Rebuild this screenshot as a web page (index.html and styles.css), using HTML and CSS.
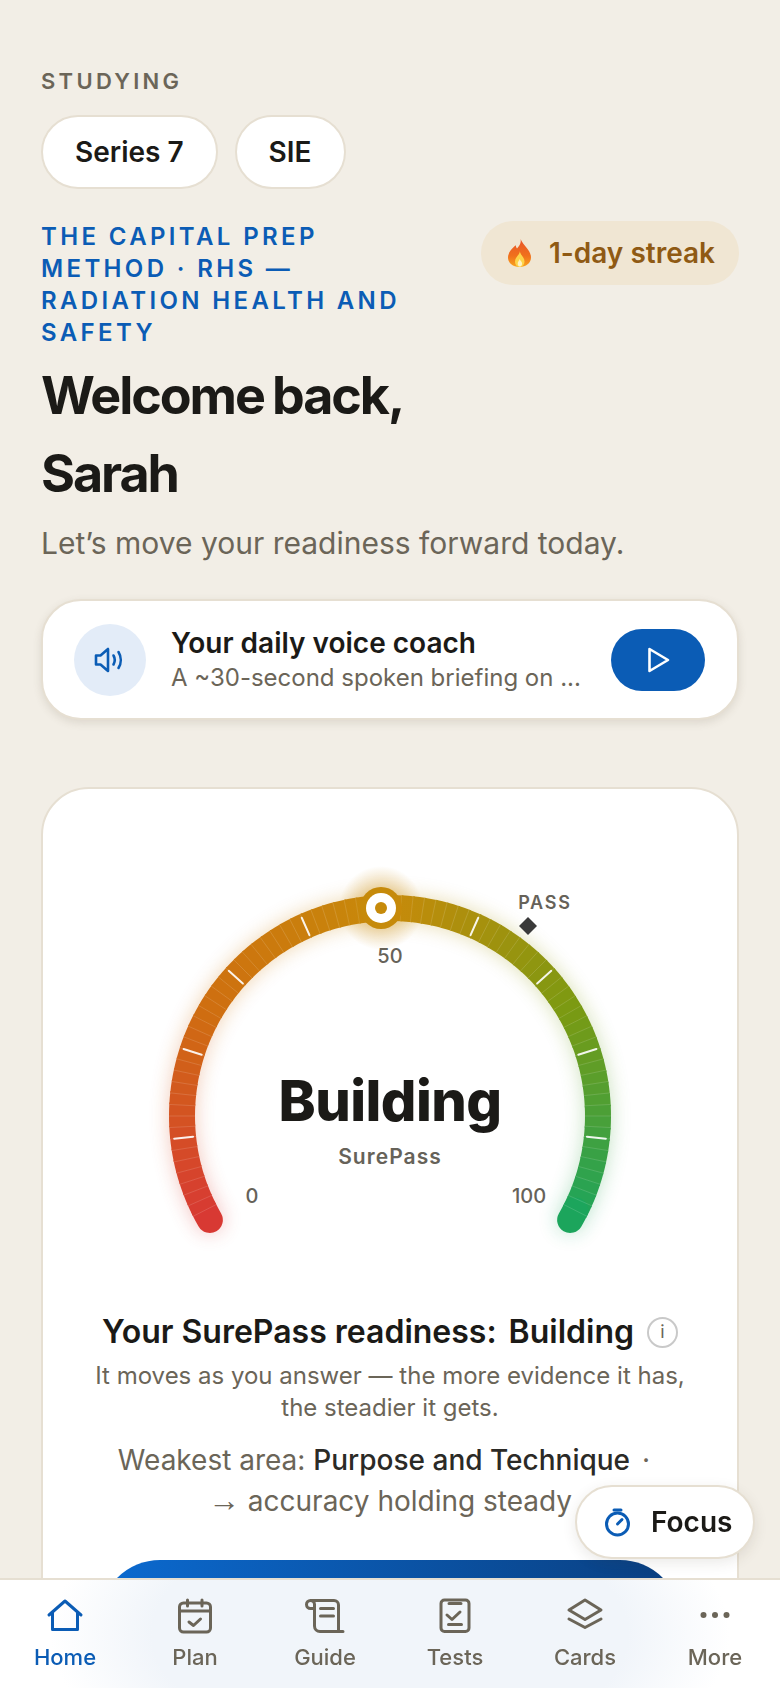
FILE: index.html
```html
<!DOCTYPE html>
<html lang="en">

<head>
    <meta charset="UTF-8">
    <meta name="viewport" content="width=device-width, initial-scale=1.0">
    <title>Home</title>
    <link rel="stylesheet" href="styles.css">
</head>

<body>
    <main class="page">
        <div class="studying-label">STUDYING</div>
        <div class="chips">
            <button class="chip">Series 7</button>
            <button class="chip">SIE</button>
        </div>

        <div class="top-row">
            <div class="eyebrow">THE CAPITAL PREP METHOD · RHS — RADIATION HEALTH AND SAFETY</div>
            <div class="streak">
                <svg class="flame" viewBox="0 0 25 28">
                    <defs>
                        <linearGradient id="flameOuter" x1="0" y1="0" x2="0" y2="1">
                            <stop offset="0" stop-color="#e8542a" />
                            <stop offset="0.6" stop-color="#f0701c" />
                            <stop offset="1" stop-color="#f9a51e" />
                        </linearGradient>
                    </defs>
                    <path fill="url(#flameOuter)" d="M13.5 0c1 4-1 6.500-3.500 9.500-.8-1-1.200-2-1.200-3.200C5 9.500 1 13.500 1 18.500 1 24 6 28 12.500 28S24 24 24 18.500C24 11 16.500 7 13.500 0z" />
                    <path fill="#fdd34a" d="M12.800 12c.5 3-4.800 6-4.800 10.500 0 3 2 5.500 4.700 5.500s4.800-2.500 4.800-5.500c0-4.500-4-6-4.700-10.500z" />
                    <path fill="#fff3c4" d="M12.700 20c-.5 1.800-2 2.500-2 4.500 0 1.800 1 3 2.200 3s2.200-1.200 2.200-3c0-2-1.900-2.700-2.400-4.500z" />
                </svg>
                <span>1-day streak</span>
            </div>
        </div>

        <h1 class="welcome">Welcome back,<br>Sarah</h1>
        <p class="subtitle">Let’s move your readiness forward today.</p>

        <section class="coach-card">
            <div class="coach-icon">
                <svg viewBox="0 0 36 36" width="36" height="36">
                    <path d="M4 13.500h4.500L16 7v22l-7.500-6.500H4z" />
                    <path d="M21.500 13.500c1.600 2.800 1.600 6.200 0 9" />
                    <path d="M26.500 10c3 4.800 3 11.200 0 16" />
                </svg>
            </div>
            <div class="coach-text">
                <div class="coach-title">Your daily voice coach</div>
                <div class="coach-sub">A ~30-second spoken briefing on ...</div>
            </div>
            <button class="play-btn">
                <svg viewBox="0 0 28 28" width="28" height="28">
                    <path d="M5.500 3v22L24 14z" />
                </svg>
            </button>
        </section>

        <section class="readiness-card">
            <svg class="gauge" id="gauge" viewBox="0 0 520 420" width="520" height="420">
                <defs>
                    <filter id="glow" filterUnits="userSpaceOnUse" x="0" y="0" width="520" height="420">
                        <feGaussianBlur stdDeviation="10" />
                    </filter>
                    <radialGradient id="knobGlow">
                        <stop offset="0.3" stop-color="#c98a0a" stop-opacity="0.45" />
                        <stop offset="1" stop-color="#c98a0a" stop-opacity="0" />
                    </radialGradient>
                </defs>
                <g id="gaugeGlow" filter="url(#glow)" opacity="0.3"></g>
                <g id="gaugeBand"></g>
                <g id="gaugeTicks"></g>
                <text class="g-num" x="260" y="107" text-anchor="middle">50</text>
                <text class="g-num" x="122" y="347" text-anchor="middle">0</text>
                <text class="g-num" x="399" y="347" text-anchor="middle">100</text>
                <text class="g-pass" x="415" y="53" text-anchor="middle">PASS</text>
                <path class="g-diamond" d="M398 61l9 9-9 9-9-9z" />
                <text class="g-status" x="260" y="265" text-anchor="middle">Building</text>
                <text class="g-name" x="260" y="308" text-anchor="middle">SurePass</text>
                <circle cx="251" cy="52" r="42" fill="url(#knobGlow)" />
                <circle cx="251" cy="52" r="21" fill="#c68a0a" />
                <circle cx="251" cy="52" r="15" fill="#fff" />
                <circle cx="251" cy="52" r="6" fill="#c68a0a" />
            </svg>

            <div class="ready-line">
                <span>Your SurePass readiness:</span>
                <span>Building</span>
                <span class="info">i</span>
            </div>
            <p class="ready-note">It moves as you answer — the more evidence it has, the steadier it gets.</p>
            <p class="weakest">Weakest area: <b>Purpose and Technique</b><span class="dot">·</span> <span class="arrow">→</span> accuracy holding steady</p>
            <button class="cta"></button>
        </section>
    </main>

    <button class="focus-btn">
        <svg viewBox="0 0 30 30" width="30" height="30">
            <path d="M11 3h7" />
            <circle cx="14.500" cy="17" r="11" />
            <path d="M14.500 17l4.500-4.500" />
        </svg>
        <span>Focus</span>
    </button>

    <nav class="tabbar">
        <a class="tab active">
            <svg viewBox="0 0 40 40"><path d="M4 20L20 6l16 14M7.500 17.500V34.500h25V17.500" /></svg>
            <span>Home</span>
        </a>
        <a class="tab">
            <svg viewBox="0 0 40 40">
                <rect x="4.500" y="8" width="31" height="29" rx="4" />
                <path d="M12.500 5v6M27 5v6M4.500 16h31M14 27l4.500 3.500 7-6.500" />
            </svg>
            <span>Plan</span>
        </a>
        <a class="tab">
            <svg viewBox="0 0 40 40">
                <path d="M5.500 5.500H29a4.500 4.500 0 0 1 4.500 4.500v26.500H38M33.500 36.500H15a5.500 5.500 0 0 1-5.500-5.500V9.500a4 4 0 1 0-4 4h4M15.500 13.500h13M15.500 21h13" />
            </svg>
            <span>Guide</span>
        </a>
        <a class="tab">
            <svg viewBox="0 0 40 40">
                <rect x="6" y="5" width="28" height="31.500" rx="3.500" />
                <path d="M14 8.500h12M12 20l5 4.500 8-7.500M13.500 29.500h13" />
            </svg>
            <span>Tests</span>
        </a>
        <a class="tab">
            <svg viewBox="0 0 40 40">
                <path d="M20 5l16 10-16 9.500L4 15zM4 24l16 8.500L36 24" />
            </svg>
            <span>Cards</span>
        </a>
        <a class="tab">
            <svg viewBox="0 0 40 40">
                <circle class="solid" cx="8.500" cy="20" r="3" />
                <circle class="solid" cx="20" cy="20" r="3" />
                <circle class="solid" cx="31.500" cy="20" r="3" />
            </svg>
            <span>More</span>
        </a>
    </nav>

    <script src="script.js"></script>
</body>

</html>
```

FILE: styles.css
```css
* {
    box-sizing: border-box;
}

html,
body {
    height: 100%;
}

body {
    margin: 0;
    background-color: #f2eee6;
    font-family: Inter, "Noto Sans", sans-serif;
    color: #1b1a17;
    overflow: hidden;
}

button {
    font-family: inherit;
    cursor: pointer;
}

.page {
    padding: 68px 41px 0;
}

.studying-label {
    font-size: 22px;
    line-height: 26px;
    font-weight: 600;
    letter-spacing: 0.15em;
    color: #6b6558;
}

.chips {
    display: flex;
    gap: 17px;
    margin-top: 21px;
}

.chip {
    height: 74px;
    padding: 0 32px;
    background-color: white;
    border: 2px solid #e6dfd2;
    border-radius: 37px;
    font-size: 28px;
    font-weight: 600;
    color: #1b1a17;
}

.top-row {
    display: flex;
    justify-content: space-between;
    align-items: flex-start;
    margin-top: 32px;
}

.eyebrow {
    max-width: 380px;
    font-size: 24px;
    line-height: 32px;
    font-weight: 600;
    letter-spacing: 0.14em;
    color: #0b5cb5;
}

.streak {
    display: flex;
    align-items: center;
    gap: 17px;
    height: 64px;
    padding: 0 24px 0 26px;
    background-color: #f0e6d3;
    border-radius: 32px;
    font-size: 28px;
    font-weight: 600;
    color: #8f5a14;
}

.flame {
    width: 25px;
    height: 28px;
}

.welcome {
    margin: 8px 0 0;
    font-size: 52px;
    line-height: 78px;
    font-weight: 700;
    letter-spacing: -0.04em;
    word-spacing: -2px;
    color: #1b1a17;
}

.subtitle {
    margin: 8px 0 0;
    font-size: 30px;
    line-height: 44px;
    color: #6b6558;
}

.coach-card {
    display: flex;
    align-items: center;
    height: 121px;
    margin-top: 34px;
    padding: 0 32px 0 31px;
    background-color: white;
    border: 2px solid #e6dfd2;
    border-radius: 40px;
    box-shadow: 0 3px 8px rgba(90, 80, 60, 0.14);
}

.coach-icon {
    display: flex;
    align-items: center;
    justify-content: center;
    width: 72px;
    height: 72px;
    flex-shrink: 0;
    background-color: #e3ecf8;
    border-radius: 50%;
}

.coach-icon svg path {
    fill: none;
    stroke: #0b5cb5;
    stroke-width: 2.6;
    stroke-linecap: round;
    stroke-linejoin: round;
}

.coach-text {
    flex: 1;
    margin-left: 25px;
    min-width: 0;
}

.coach-title {
    font-size: 28px;
    line-height: 36px;
    font-weight: 600;
}

.coach-sub {
    font-size: 24px;
    line-height: 34px;
    color: #6b6558;
    white-space: nowrap;
}

.play-btn {
    display: flex;
    align-items: center;
    justify-content: center;
    width: 94px;
    height: 62px;
    flex-shrink: 0;
    background-color: #0b5cb5;
    border: none;
    border-radius: 31px;
}

.play-btn svg path {
    fill: none;
    stroke: white;
    stroke-width: 2.6;
    stroke-linejoin: round;
}

.readiness-card {
    height: 900px;
    margin-top: 67px;
    padding: 67px 57px 0;
    background-color: white;
    border: 2px solid #e6dfd2;
    border-radius: 48px;
    text-align: center;
}

.gauge {
    display: block;
    margin: 0 auto;
    overflow: visible;
}

.g-num {
    font-size: 20px;
    font-weight: 500;
    fill: #666259;
}

.g-pass {
    font-size: 18px;
    font-weight: 600;
    letter-spacing: 0.1em;
    fill: #666259;
}

.g-diamond {
    fill: #3a3a3a;
}

.g-status {
    font-size: 56px;
    font-weight: 800;
    letter-spacing: -0.01em;
    fill: #1b1a17;
}

.g-name {
    font-size: 21px;
    font-weight: 600;
    letter-spacing: 0.05em;
    fill: #666259;
}

.ready-line {
    display: flex;
    justify-content: center;
    align-items: center;
    gap: 12px;
    margin-top: 34px;
    font-size: 32px;
    line-height: 44px;
    font-weight: 600;
    white-space: nowrap;
}

.info {
    display: flex;
    align-items: center;
    justify-content: center;
    width: 31px;
    height: 31px;
    margin-left: 1px;
    border: 2px solid #c9c9c9;
    border-radius: 50%;
    font-size: 18px;
    line-height: 1;
    font-weight: 400;
    color: #6b6558;
}

.ready-note {
    margin: 6px -20px 0;
    font-size: 24px;
    line-height: 32px;
    color: #6b6558;
}

.weakest {
    margin: 16px 0 0;
    font-size: 28px;
    line-height: 41px;
    color: #6b6558;
}

.weakest b {
    font-weight: 500;
    color: #2b2a26;
}

.dot {
    margin: 0 12px;
}

.arrow {
    font-family: "Liberation Sans", sans-serif;
    font-size: 32px;
    line-height: 0;
}

.cta {
    display: block;
    width: 580px;
    height: 120px;
    margin: 38px 0 0;
    background: linear-gradient(90deg, #0b6ad0, #0a3f80);
    border: none;
    border-radius: 60px;
}

.focus-btn {
    position: fixed;
    top: 1485px;
    left: 575px;
    display: flex;
    align-items: center;
    gap: 18px;
    width: 180px;
    height: 74px;
    padding: 0 0 0 26px;
    background-color: white;
    border: 2px solid #e6dfd2;
    border-radius: 37px;
    box-shadow: 0 4px 14px rgba(60, 50, 30, 0.1);
    font-size: 28px;
    font-weight: 600;
    color: #1b1a17;
}

.focus-btn svg {
    fill: none;
    stroke: #0b5cb5;
    stroke-width: 3;
    stroke-linecap: round;
}

.tabbar {
    position: fixed;
    left: 0;
    right: 0;
    bottom: 0;
    display: grid;
    grid-template-columns: repeat(6, 1fr);
    height: 110px;
    padding-top: 15px;
    background: radial-gradient(ellipse 340px 170px at 50% 50%, #f1f5fa 70%, white 100%);
    border-top: 2px solid #e6dfd2;
}

.tab {
    display: flex;
    flex-direction: column;
    align-items: center;
    font-size: 22px;
    line-height: 26px;
    font-weight: 500;
    color: #6b6558;
}

.tab svg {
    width: 40px;
    height: 40px;
    margin-bottom: 9px;
    fill: none;
    stroke: currentColor;
    stroke-width: 3;
    stroke-linecap: round;
    stroke-linejoin: round;
}

.tab svg .solid {
    fill: currentColor;
    stroke: none;
}

.tab.active {
    color: #0b5cb5;
}
```

FILE: script.js
```js
// builds the gauge band: 80 little segments, 3deg each, over a 240deg sweep
const cx = 260;
const cy = 260;
const radius = 208;
const svgNs = "http://www.w3.org/2000/svg";

const stops = [
    [0, [216, 56, 52]],
    [0.25, [207, 110, 16]],
    [0.5, [198, 138, 10]],
    [0.75, [122, 154, 18]],
    [1, [26, 165, 94]]
];

function colorAt(t) {
    for (let i = 1; i < stops.length; i++) {
        if (t <= stops[i][0]) {
            const f = (t - stops[i - 1][0]) / (stops[i][0] - stops[i - 1][0]);
            const a = stops[i - 1][1];
            const b = stops[i][1];
            return "rgb(" + a.map((v, k) => Math.round(v + (b[k] - v) * f)).join(",") + ")";
        }
    }
    return "rgb(26,165,94)";
}

// t goes 0..1 clockwise from lower left to lower right
function point(t, r) {
    const deg = 210 - t * 240;
    const rad = deg * Math.PI / 180;
    return [cx + r * Math.cos(rad), cy - r * Math.sin(rad)];
}

function add(parent, tag, attrs) {
    const el = document.createElementNS(svgNs, tag);
    Object.keys(attrs).forEach(k => el.setAttribute(k, attrs[k]));
    parent.appendChild(el);
    return el;
}

function arc(t1, t2) {
    const a = point(t1, radius);
    const b = point(t2, radius);
    return "M" + a[0] + " " + a[1] + "A" + radius + " " + radius + " 0 0 1 " + b[0] + " " + b[1];
}

function drawBand(group, gaps) {
    const count = 80;
    for (let i = 0; i < count; i++) {
        const t1 = i / count;
        const t2 = (i + 1) / count;
        add(group, "path", {
            d: arc(t1, t2 + (i < count - 1 ? 0.002 : 0)),
            fill: "none",
            stroke: colorAt((t1 + t2) / 2),
            "stroke-width": 26,
            "stroke-linecap": (i === 0 || i === count - 1) ? "round" : "butt"
        });
    }
    if (!gaps) return;
    for (let i = 1; i < count; i++) {
        const a = point(i / count, radius - 13);
        const b = point(i / count, radius + 13);
        add(group, "line", {
            x1: a[0], y1: a[1], x2: b[0], y2: b[1],
            stroke: "#fff",
            "stroke-opacity": 0.14,
            "stroke-width": 1
        });
    }
}

drawBand(document.getElementById("gaugeGlow"), false);
drawBand(document.getElementById("gaugeBand"), true);

// major ticks every 10, the one at 50 sits under the knob
const ticks = document.getElementById("gaugeTicks");
for (let v = 10; v < 100; v += 10) {
    const a = point(v / 100, radius - 10);
    const b = point(v / 100, radius + 9);
    add(ticks, "line", {
        x1: a[0], y1: a[1], x2: b[0], y2: b[1],
        stroke: "#fff",
        "stroke-opacity": 0.9,
        "stroke-width": 2,
        "stroke-linecap": "round"
    });
}
```
